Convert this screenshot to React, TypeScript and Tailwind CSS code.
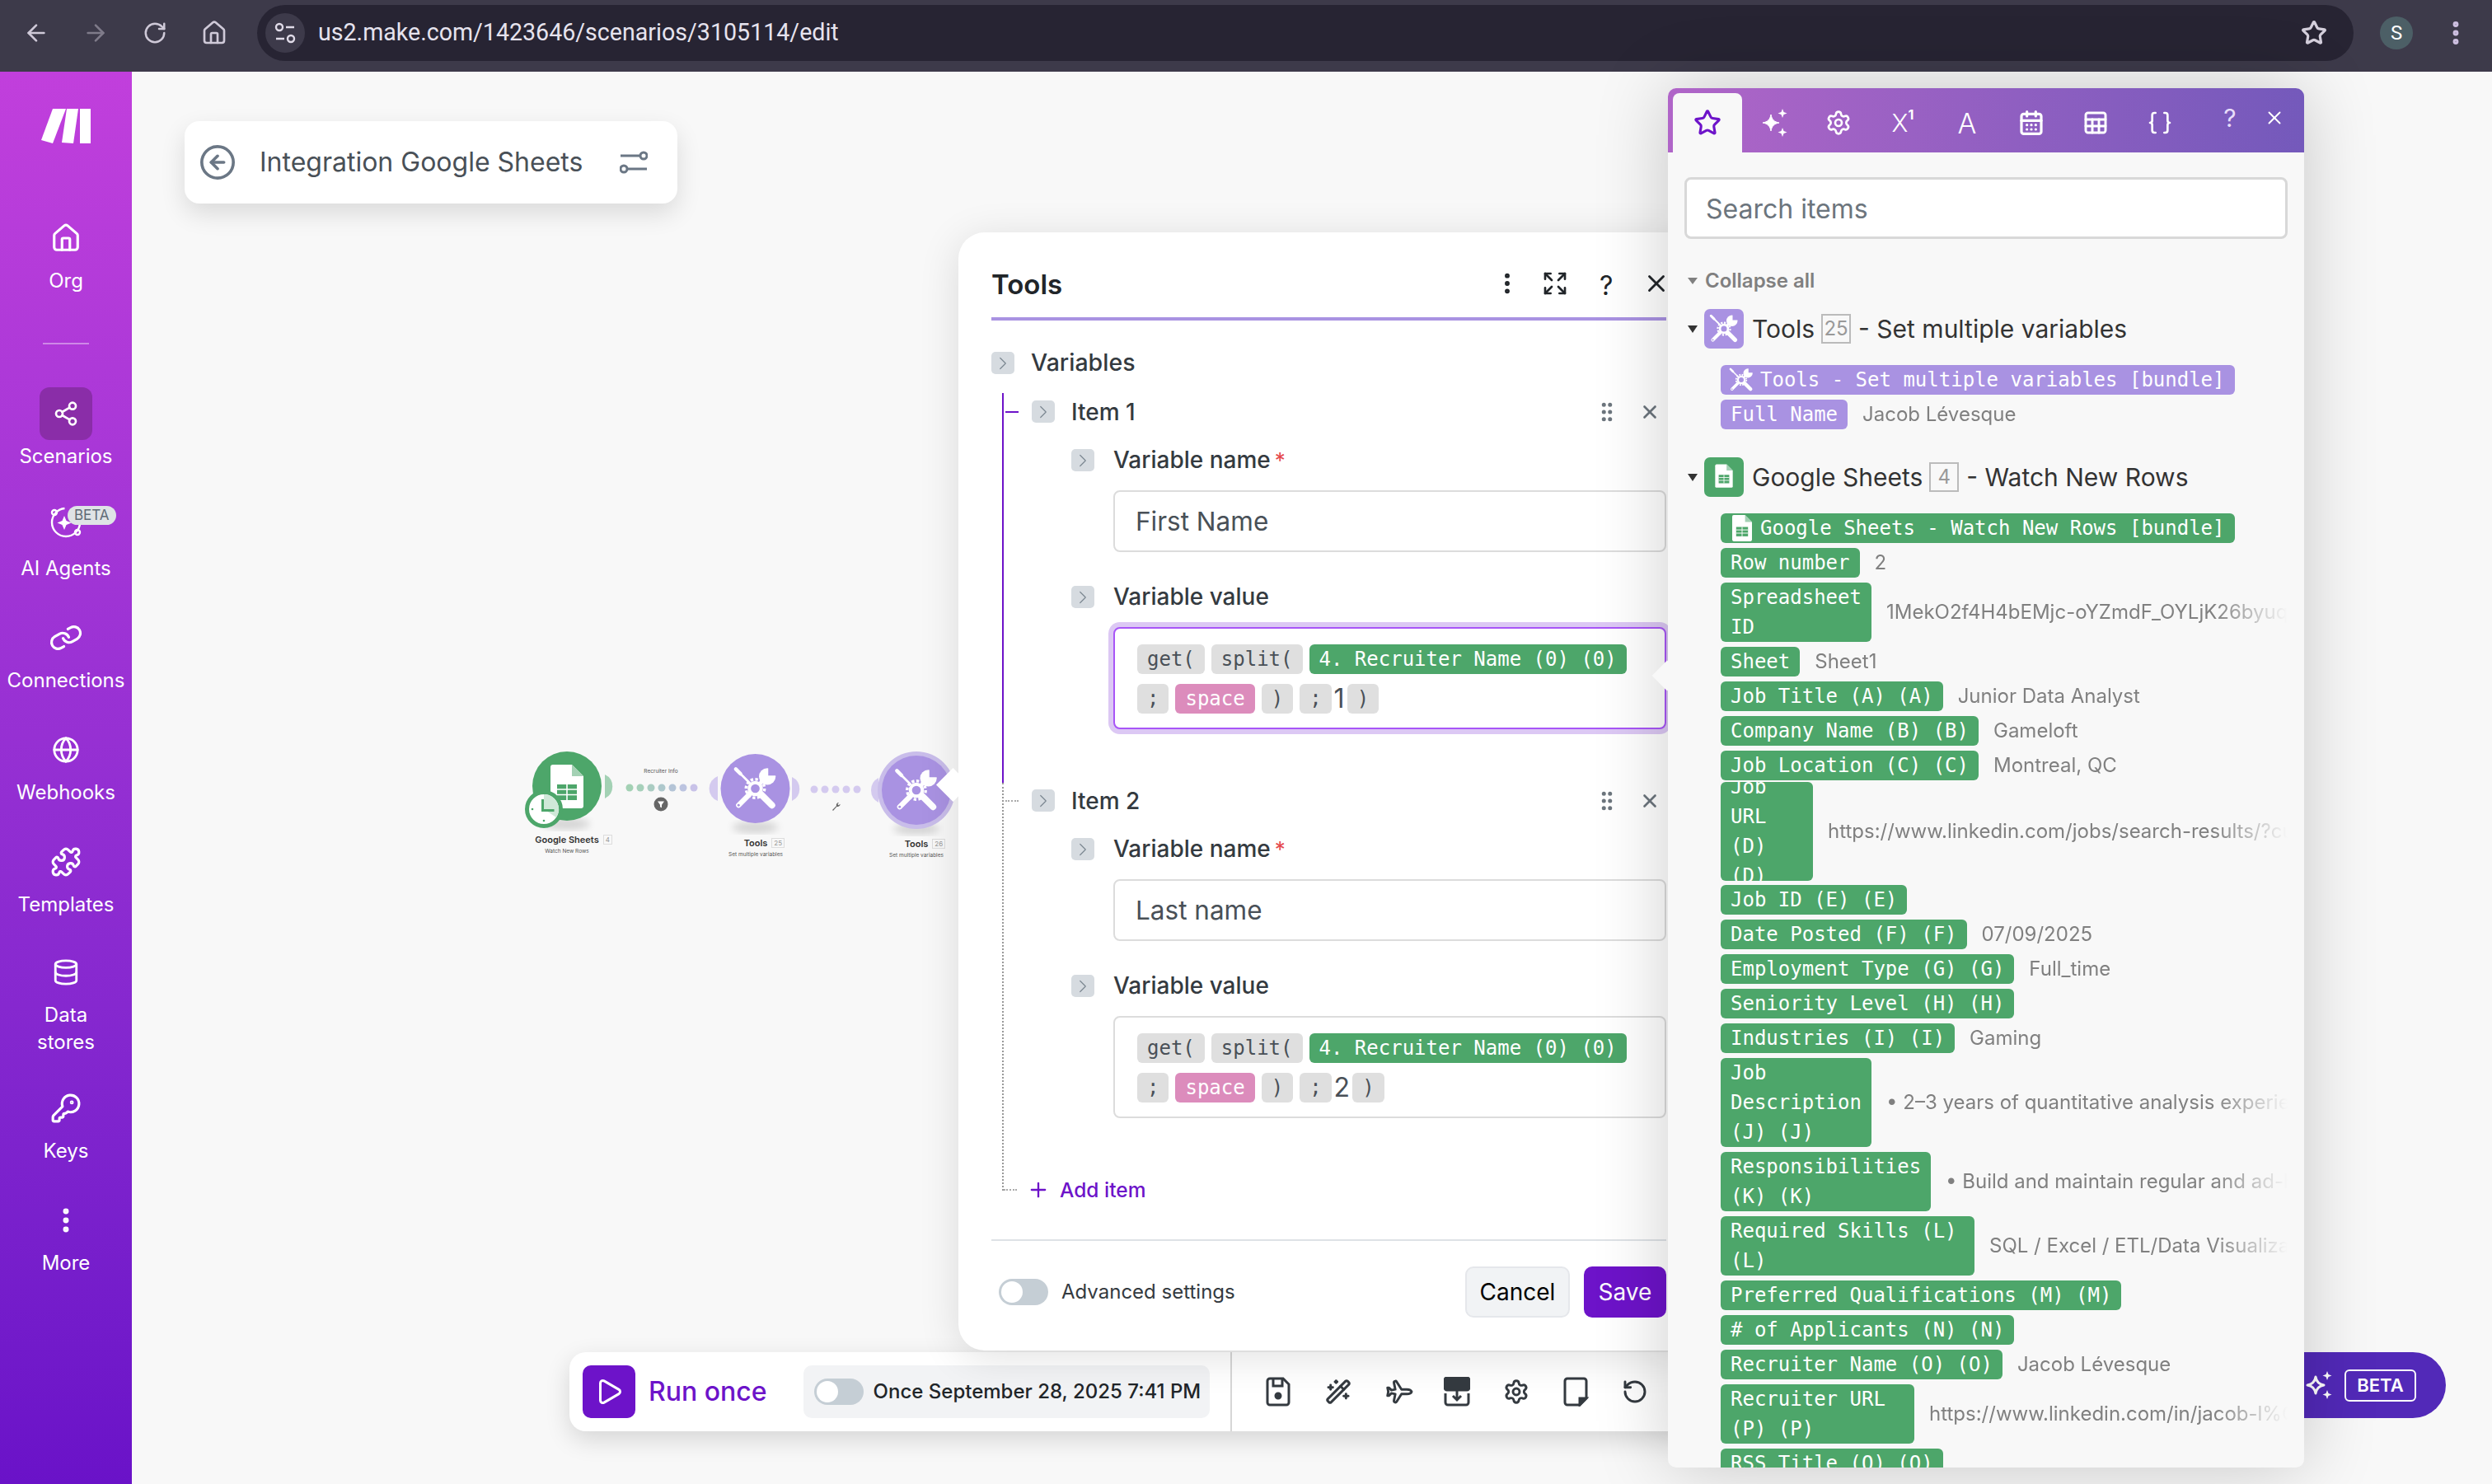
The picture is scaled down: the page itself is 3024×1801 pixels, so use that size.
import type { ReactNode } from 'react';
import {
  ArrowLeft,
  ArrowRight,
  Braces,
  CalendarDays,
  ChevronRight,
  CircleArrowLeft,
  Database,
  EllipsisVertical,
  Expand,
  Globe,
  GripVertical,
  House,
  KeyRound,
  Link as LinkIcon,
  Plane,
  Play,
  Plus,
  Puzzle,
  RotateCcw,
  RotateCw,
  Settings,
  Share2,
  Sheet,
  Star,
  WandSparkles,
  X,
} from 'lucide-react';

const MONO = "font-['DejaVu_Sans_Mono',monospace] text-[24px] leading-[36px]";

function ToolsGlyph({ bg = '#a992e2' }: { bg?: string }) {
  return (
    <g stroke="#fff" fill="none" strokeLinecap="round">
      <line x1="4" y1="4" x2="18" y2="18" strokeWidth="2.4" />
      <line x1="3" y1="3" x2="8" y2="8" strokeWidth="4" />
      <line x1="29" y1="29" x2="42" y2="42" strokeWidth="7" />
      <line x1="18" y1="30" x2="6" y2="42" strokeWidth="5.5" />
      <circle cx="6" cy="42" r="1.3" fill={bg} stroke="none" />
      <line x1="29" y1="19" x2="36" y2="12" strokeWidth="4" />
      <circle cx="37" cy="11" r="9" fill="#fff" stroke="none" />
      <polygon points="38,10 38,-2 50,10" fill={bg} stroke="none" />
      <circle cx="24" cy="24" r="10" strokeWidth="3" strokeDasharray="3 2.2" strokeLinecap="butt" />
      <circle cx="24" cy="24" r="6.5" strokeWidth="3.5" fill={bg} />
    </g>
  );
}

function SheetGlyph({ green = '#4da66a' }: { green?: string }) {
  return (
    <g>
      <path d="M0 3a3 3 0 0 1 3-3h23l14 14v36a3 3 0 0 1-3 3H3a3 3 0 0 1-3-3z" fill="#fff" />
      <path d="M26 0l14 14H26z" fill="#a3d1b4" />
      <path d="M8 24h24v19H8z" fill={green} />
      <path d="M8 30h24M8 36.5h24M20 24v19" stroke="#fff" strokeWidth="1.6" />
    </g>
  );
}

// big four point star with two small ones, used in the tab bar and on the beta pill
function SparkIcon({ filled }: { filled?: boolean }) {
  return (
    <svg
      className="w-[34px] h-[36px]"
      viewBox="0 0 34 36"
      fill={filled ? '#fff' : 'none'}
      stroke="#fff"
      strokeWidth={filled ? 1 : 3}
      strokeLinejoin="round"
    >
      <path d="M13 8c1 6 4 9 10 10-6 1-9 4-10 10-1-6-4-9-10-10 6-1 9-4 10-10z" />
      <path d="M27 1l1.500 4 4 1.500-4 1.500-1.500 4-1.500-4-4-1.500 4-1.500z" fill="#fff" stroke="none" />
      <path d="M27 24l1.500 4 4 1.500-4 1.500-1.500 4-1.500-4-4-1.500 4-1.500z" fill="#fff" stroke="none" />
    </svg>
  );
}

function DiagramNode({ x, y, ring }: { x: number; y: number; ring?: boolean }) {
  return (
    <g>
      <ellipse cx={x} cy={y + 47} rx="28" ry="7" fill="#000" opacity="0.14" filter="url(#soft)" />
      {ring && <circle cx={x} cy={y} r="47" fill="#c9bdea" />}
      <circle cx={x} cy={y} r="42" fill="#a992e2" />
      <g transform={`translate(${x - 27} ${y - 27}) scale(1.125)`}>
        <ToolsGlyph />
      </g>
    </g>
  );
}

function Diagram() {
  const greenDots = ['#a3d1b4', '#a6d0ba', '#aaccc2', '#aec8cc', '#b4c4d6', '#bcc4e0', '#c8c2e8'];
  return (
    <svg className="absolute left-[620px] top-[900px] w-[560px] h-[160px]" viewBox="620 900 560 160">
      <defs>
        <filter id="soft">
          <feGaussianBlur stdDeviation="5" />
        </filter>
      </defs>
      <path d="M734 940a16 16 0 0 1 0 29z" fill="#a3d1b4" />
      <path d="M871 942a16 16 0 0 0 0 30z" fill="#d4caef" />
      <path d="M961 943a16 16 0 0 1 0 29z" fill="#d4caef" />
      <path d="M1066 944a17 17 0 0 0 0 30z" fill="#d4caef" />
      {greenDots.map((fill, i) => (
        <circle key={fill} cx={764 + i * 13} cy="956" r="4.5" fill={fill} />
      ))}
      {[0, 1, 2, 3, 4].map((i) => (
        <circle key={i} cx={988 + i * 13} cy="958" r="4.5" fill="#d4caef" />
      ))}
      <circle cx="802" cy="976" r="8.5" fill="#666" />
      <path d="M798 972.5h8l-3 4.2v3.6l-2-1v-2.6z" fill="#fff" />
      <path d="M1010 983l5-5a3 3 0 0 1 3-4l-1.6 2 1.2 1.2 2-1.4a3 3 0 0 1-4 3l-4.600 5.200z" fill="#666" />

      <ellipse cx="688" cy="1000" rx="28" ry="7" fill="#000" opacity="0.14" filter="url(#soft)" />
      <circle cx="688" cy="954" r="42" fill="#4da66a" />
      <g transform="translate(668 928)">
        <SheetGlyph />
      </g>
      <circle cx="660" cy="982" r="20.500" fill="#fff" stroke="#4da66a" strokeWidth="5" />
      <path d="M660 982v-18a18 18 0 0 1 15 28z" fill="#cfe8d8" />
      <path d="M658.500 970v13.500h14" fill="none" stroke="#4da66a" strokeWidth="3" />
      <circle cx="646" cy="982" r="1.300" fill="#4da66a" />
      <circle cx="660" cy="996" r="1.300" fill="#4da66a" />

      <DiagramNode x={916.5} y={957} />
      <DiagramNode x={1112} y={959} ring />
    </svg>
  );
}

function NodeLabel({ title, num, sub, className }: { title: string; num: string; sub: string; className: string }) {
  return (
    <div className={`absolute flex flex-col items-center w-[140px] ${className}`}>
      <span className="relative text-[11px] leading-[13px] font-semibold text-[#333]">
        {title}
        <span className="absolute left-full top-0 ml-[5px] border border-[#ddd] text-[8px] leading-[10px] px-[2px] font-normal text-[#999]">
          {num}
        </span>
      </span>
      <span className="text-[6.5px] leading-[8px] mt-[3px] text-[#555]">{sub}</span>
    </div>
  );
}

function ChevronBox() {
  return (
    <span className="flex items-center justify-center w-[28px] h-[27px] shrink-0 rounded-[5px] bg-[#d6dbe0]">
      <ChevronRight size={26} strokeWidth={1.1} className="text-[#7c8791]" />
    </span>
  );
}

function Toggle() {
  return (
    <span className="flex items-center w-[60px] h-[32px] shrink-0 rounded-full bg-[#c5ced5] pl-[3px]">
      <span className="w-[26px] h-[26px] rounded-full bg-white" />
    </span>
  );
}

function Token({ children, className = 'bg-[#dfdfdf] text-[#495057]' }: { children: ReactNode; className?: string }) {
  return <span className={`${MONO} px-3 rounded-[6px] whitespace-pre ${className}`}>{children}</span>;
}

function Field({ label, required, children }: { label: string; required?: boolean; children: ReactNode }) {
  return (
    <>
      <div className="flex items-center gap-[23px] h-[27px]">
        <ChevronBox />
        <span className="text-[28px] font-medium text-[#343a40] leading-[27px]">
          {label}
          {required && <span className="text-[#e5484d] text-[26px] ml-[5px] font-normal">*</span>}
        </span>
      </div>
      <div className="ml-[51px] mt-[23px] w-[671px]">{children}</div>
    </>
  );
}

function VariableItem({ title, name, num, active }: { title: string; name: string; num: string; active?: boolean }) {
  return (
    <div
      className={
        active
          ? 'border-l-2 border-[#6d13c9] pt-[9px] pb-[65px]'
          : 'border-l-2 border-dotted border-[#999] pt-[8px] pb-[88px]'
      }
    >
      <div className="flex items-center h-[27px]">
        <span className={active ? 'ml-[2px] w-4 h-[2px] bg-[#6d13c9]' : 'ml-[2px] w-4 border-t-2 border-dotted border-[#aaa]'} />
        <span className="ml-[16px]">
          <ChevronBox />
        </span>
        <span className="ml-[20px] text-[28px] font-medium text-[#343a40]">{title}</span>
        <GripVertical size={30} strokeWidth={2} className="ml-auto text-[#6c757d]" />
        <X size={26} strokeWidth={2.4} className="ml-[24px] mr-[7px] text-[#6c757d]" />
      </div>
      <div className="pl-[82px] mt-[32px]">
        <Field label="Variable name" required>
          <div className="flex items-center h-[75px] rounded-[8px] border-2 border-[#dcdcdc] bg-white pl-[25px] text-[31.5px] text-[#495057]">
            {name}
          </div>
        </Field>
        <div className="h-[41px]" />
        <Field label="Variable value">
          <div
            className={`flex flex-wrap items-center content-start gap-x-2 gap-y-3 h-[124px] rounded-[8px] border-2 bg-white pl-[27px] pt-[19px] ${
              active ? 'border-[#a855f7] ring-[6px] ring-[#dcc8f4]' : 'border-[#dcdcdc]'
            }`}
          >
            <Token>get(</Token>
            <Token>split(</Token>
            <Token className="bg-[#4da66a] text-white">4. Recruiter Name (0) (0)</Token>
            <Token>;</Token>
            <Token className="bg-[#dc8cbc] text-white">space</Token>
            <Token>)</Token>
            <span className="flex items-center">
              <Token>;</Token>
              <span className="text-[32px] leading-[36px] text-[#495057] px-[3px]">{num}</span>
              <Token>)</Token>
            </span>
          </div>
        </Field>
      </div>
    </div>
  );
}

function ToolsPanel() {
  return (
    <section className="absolute left-[1163px] top-[282px] w-[899px] rounded-[32px] bg-white px-10 pb-10 shadow-[0_8px_50px_rgba(0,0,0,0.12)]">
      <span className="absolute -left-[21px] top-[656px] w-[29px] h-[29px] rotate-45 bg-white" />
      <header className="relative flex items-center h-[107px] pt-6 border-b-4 border-[#a992e2] text-[#212529]">
        <h2 className="text-[33px] font-semibold">Tools</h2>
        <EllipsisVertical size={32} strokeWidth={2.4} className="absolute left-[610px] top-[46px]" />
        <Expand size={32} strokeWidth={2} className="absolute left-[668px] top-[46px]" />
        <span className="absolute left-[738px] top-[41px] text-[32px]">?</span>
        <X size={34} strokeWidth={2} className="absolute left-[790px] top-[45px]" />
      </header>
      <div className="flex items-center gap-[20px] h-[27px] mt-[38px]">
        <ChevronBox />
        <span className="text-[28.5px] font-medium text-[#343a40]">Variables</span>
      </div>
      <div className="ml-[13px] mt-[23px]">
        <VariableItem title="Item 1" name="First Name" num="1" active />
        <VariableItem title="Item 2" name="Last name" num="2" />
        <div className="flex items-center h-[28px] -mt-[15px] relative">
          <span className="ml-[2px] w-4 border-t-2 border-dotted border-[#aaa]" />
          <Plus size={28} strokeWidth={2} className="ml-[12px] text-[#6d13c9]" />
          <span className="ml-[12px] text-[24.5px] font-medium text-[#6d13c9]">Add item</span>
        </div>
      </div>
      <div className="mt-[46px] border-t-2 border-[#dee2e6]" />
      <footer className="flex items-center mt-[31px]">
        <span className="ml-[9px]">
          <Toggle />
        </span>
        <span className="ml-4 text-[24px] text-[#343a40]">Advanced settings</span>
        <button className="ml-auto w-[127px] h-[62px] rounded-[10px] border-2 border-[#e5e7eb] bg-[#f1f3f5] text-[28px] text-black">
          Cancel
        </button>
        <button className="ml-[17px] w-[100px] h-[62px] rounded-[10px] bg-[#6d13c9] text-[28px] text-white">Save</button>
      </footer>
    </section>
  );
}

function Toolbar() {
  const icon = 'w-[32px] h-[36px] text-[#343a40]';
  return (
    <div className="absolute left-[691px] top-[1641px] w-[1380px] h-[96px] flex items-center rounded-[20px] bg-white pl-4 shadow-[0_10px_30px_rgba(0,0,0,0.14)]">
      <span className="flex items-center justify-center w-[64px] h-[64px] rounded-[10px] bg-[#6d13c9]">
        <Play size={36} strokeWidth={2} className="text-white" />
      </span>
      <span className="ml-4 text-[32px] font-medium text-[#6d13c9]">Run once</span>
      <div className="ml-[44px] flex items-center w-[493px] h-[64px] rounded-[10px] bg-[#f2f3f5] pl-[13px]">
        <Toggle />
        <span className="ml-3 text-[24px] font-medium text-[#212529] whitespace-nowrap">Once September 28, 2025 7:41 PM</span>
      </div>
      <div className="ml-[25px] self-stretch border-l-2 border-[#d6d6d6]" />
      <div className="flex items-center gap-[40px] ml-[41px]">
        <svg className={icon} viewBox="0 0 32 36" fill="none" stroke="currentColor" strokeWidth="3">
          <path d="M5 2h16l7 7v22a3 3 0 0 1-3 3H5a3 3 0 0 1-3-3V5a3 3 0 0 1 3-3z" />
          <path d="M9 2v9h11V2" />
          <circle cx="15" cy="23" r="3" fill="currentColor" />
        </svg>
        <WandSparkles className={icon} strokeWidth={2.2} />
        <Plane className={`${icon} rotate-45`} strokeWidth={2.2} />
        <svg className={icon} viewBox="0 0 32 36" fill="none" stroke="currentColor" strokeWidth="3">
          <rect x="1" y="1" width="30" height="15" rx="3" fill="currentColor" />
          <path d="M2 20v11a3 3 0 0 0 3 3h22a3 3 0 0 0 3-3V20" />
          <path d="M16 17v10M11 23l5 5 5-5" />
        </svg>
        <Settings className={icon} strokeWidth={2.2} />
        <svg className={icon} viewBox="0 0 32 36" fill="none" stroke="currentColor" strokeWidth="3">
          <path d="M6 2h20a3 3 0 0 1 3 3v21l-8 8H6a3 3 0 0 1-3-3V5a3 3 0 0 1 3-3z" />
          <path d="M29 26h-8v8z" fill="currentColor" />
        </svg>
        <RotateCcw className={icon} strokeWidth={2.2} />
      </div>
    </div>
  );
}

const TOOL_ROWS = [{ label: 'Full Name', value: 'Jacob Lévesque' }];

const SHEET_ROWS = [
  { label: 'Row number', value: '2' },
  { label: 'Spreadsheet ID', value: '1MekO2f4H4bEMjc-oYZmdF_OYLjK26byuqhT3xN0', box: 'w-[183px]' },
  { label: 'Sheet', value: 'Sheet1' },
  { label: 'Job Title (A) (A)', value: 'Junior Data Analyst' },
  { label: 'Company Name (B) (B)', value: 'Gameloft' },
  { label: 'Job Location (C) (C)', value: 'Montreal, QC' },
  {
    label: 'Job URL (D) (D)',
    value: 'https://www.linkedin.com/jobs/search-results/?currentJobId=41',
    box: 'w-[112px] h-[120px]',
    row: '-mt-[4px] mb-[5px]',
  },
  { label: 'Job ID (E) (E)', value: '' },
  { label: 'Date Posted (F) (F)', value: '07/09/2025' },
  { label: 'Employment Type (G) (G)', value: 'Full_time' },
  { label: 'Seniority Level (H) (H)', value: '' },
  { label: 'Industries (I) (I)', value: 'Gaming' },
  { label: 'Job Description (J) (J)', value: '• 2–3 years of quantitative analysis experience', box: 'w-[183px]' },
  { label: 'Responsibilities (K) (K)', value: '• Build and maintain regular and ad-hoc reports', box: 'w-[255px]' },
  { label: 'Required Skills (L) (L)', value: 'SQL / Excel / ETL/Data Visualization', box: 'w-[308px]' },
  { label: 'Preferred Qualifications (M) (M)', value: '' },
  { label: '# of Applicants (N) (N)', value: '' },
  { label: 'Recruiter Name (O) (O)', value: 'Jacob Lévesque' },
  { label: 'Recruiter URL (P) (P)', value: 'https://www.linkedin.com/in/jacob-l%C3%A9vesque', box: 'w-[235px]' },
  { label: 'RSS Title (Q) (Q)', value: '' },
];

function DataRow({ label, value, color, box, row }: { label: string; value: string; color: string; box?: string; row?: string }) {
  return (
    <div className={`flex items-center ${row ?? 'mb-[6px]'}`}>
      <span
        className={`${MONO} ${color} ${box ?? 'whitespace-pre'} flex items-center shrink-0 px-3 rounded-[6px] text-white overflow-hidden`}
      >
        <span>{label}</span>
      </span>
      <span className="ml-[18px] min-w-0 flex-1 whitespace-nowrap overflow-hidden text-[24px] leading-[36px] text-[#808080] [mask-image:linear-gradient(to_left,transparent,black_90px)]">
        {value}
      </span>
    </div>
  );
}

function SectionHeader({ icon, name, num, sub }: { icon: ReactNode; name: string; num: string; sub: string }) {
  return (
    <div className="flex items-center h-[48px] text-[30px] text-[#333]">
      <span className="ml-[4px] w-0 h-0 border-x-[6px] border-x-transparent border-t-[9px] border-t-[#333]" />
      <span className="ml-[8px] flex items-center justify-center w-[48px] h-[48px] rounded-[7px]">{icon}</span>
      <span className="ml-[10px]">{name}</span>
      <span className="ml-[8px] w-[36px] h-[36px] border-2 border-[#bbb] text-[24px] leading-[32px] text-center text-[#999]">{num}</span>
      <span className="ml-[9px]">- {sub}</span>
    </div>
  );
}

function MappingPanel() {
  const tab = 'flex items-center justify-center w-[78px] pt-[6px] text-white';
  return (
    <aside className="absolute left-[2024px] top-[107px] w-[772px] h-[1674px] flex flex-col rounded-[10px] bg-[#f8f8f8] shadow-[0_0_90px_rgba(0,0,0,0.2)]">
      <span className="absolute -left-[14px] top-[700px] w-[26px] h-[26px] rotate-45 bg-[#f8f8f8]" />
      <div className="flex h-[78px] shrink-0 pl-[6px] rounded-t-[10px] bg-linear-to-r from-[#b065c8] to-[#7459bb]">
        <div className="flex items-center justify-center w-[84px] h-[72px] mt-[6px] rounded-t-[8px] bg-[#f8f8f8]">
          <Star size={34} strokeWidth={2.2} className="text-[#6d13c9]" />
        </div>
        <span className={tab}>
          <SparkIcon filled />
        </span>
        <span className={tab}>
          <Settings size={32} strokeWidth={2} />
        </span>
        <span className={`${tab} text-[30px] font-light`}>
          X<sup className="text-[16px] font-bold -mt-1">1</sup>
        </span>
        <span className={`${tab} text-[34px] font-light`}>A</span>
        <span className={tab}>
          <CalendarDays size={32} strokeWidth={2.4} />
        </span>
        <span className={tab}>
          <Sheet size={32} strokeWidth={2.2} />
        </span>
        <span className={tab}>
          <Braces size={32} strokeWidth={2} />
        </span>
        <span className="flex items-center justify-center w-[40px] ml-[26px] -mt-[6px] text-[30px] text-[#e8defa]">?</span>
        <span className="flex items-center justify-center w-[40px] ml-[14px] -mt-[6px] text-white">
          <X size={26} strokeWidth={1.8} />
        </span>
      </div>
      <div className="flex-1 min-h-0 overflow-hidden px-5 pt-[30px]">
        <div className="flex items-center h-[75px] rounded-[8px] border-[3px] border-[#d8d8d8] bg-white pl-[23px] pt-[2px] text-[32px] text-[#6c757d]">
          Search items
        </div>
        <div className="flex items-center h-[30px] mt-9 text-[24px] font-semibold text-[#808080]">
          <span className="ml-[4px] w-0 h-0 border-x-[6px] border-x-transparent border-t-[8px] border-t-[#808080]" />
          <span className="ml-[9px]">Collapse all</span>
        </div>
        <div className="mt-[19px]">
          <SectionHeader
            name="Tools"
            num="25"
            sub="Set multiple variables"
            icon={
              <svg className="w-[48px] h-[48px] rounded-[7px] bg-[#a992e2]" viewBox="-8 -8 64 64">
                <ToolsGlyph />
              </svg>
            }
          />
        </div>
        <div className="pl-[44px] mt-5">
          <div className={`${MONO} flex items-center w-[624px] h-[36px] mb-[6px] pl-[10px] rounded-[6px] bg-[#a992e2] text-white whitespace-pre`}>
            <svg className="w-[30px] h-[30px] mr-[8px]" viewBox="0 0 48 48">
              <ToolsGlyph />
            </svg>
            Tools - Set multiple variables [bundle]
          </div>
          {TOOL_ROWS.map((r) => (
            <DataRow key={r.label} {...r} color="bg-[#a992e2]" />
          ))}
        </div>
        <div className="mt-[34px]">
          <SectionHeader
            name="Google Sheets"
            num="4"
            sub="Watch New Rows"
            icon={
              <svg className="w-[48px] h-[48px] rounded-[7px] bg-[#4da66a]" viewBox="-25 -16 90 90">
                <SheetGlyph />
              </svg>
            }
          />
        </div>
        <div className="pl-[44px] mt-5">
          <div className={`${MONO} flex items-center w-[624px] h-[36px] mb-[6px] pl-[14px] rounded-[6px] bg-[#4da66a] text-white whitespace-pre`}>
            <svg className="w-[24px] h-[32px] mr-[10px]" viewBox="0 0 40 53">
              <SheetGlyph />
            </svg>
            Google Sheets - Watch New Rows [bundle]
          </div>
          {SHEET_ROWS.map((r) => (
            <DataRow key={r.label} {...r} color="bg-[#4da66a]" />
          ))}
        </div>
      </div>
    </aside>
  );
}

function SideItem({
  label,
  icon,
  active,
  badge,
  className = '',
}: {
  label: ReactNode;
  icon: ReactNode;
  active?: boolean;
  badge?: boolean;
  className?: string;
}) {
  return (
    <div className={`relative flex flex-col items-center w-full text-white ${className}`}>
      <span className={`flex items-center justify-center w-[64px] h-[64px] rounded-[12px] ${active ? 'bg-[#8a2da8]' : ''}`}>{icon}</span>
      {badge && (
        <span className="absolute left-[82px] top-[8px] px-[8px] rounded-full bg-[#dfe3e6] text-[17px] leading-[23px] text-[#5f6b76]">BETA</span>
      )}
      <span className="mt-[3px] text-[24px] leading-[33px] text-center">{label}</span>
    </div>
  );
}

function Sidebar() {
  const size = 'w-[38px] h-[38px]';
  return (
    <nav className="flex flex-col items-center w-40 shrink-0 bg-linear-to-b from-[#c13fdc] to-[#6a12c8]">
      <svg className="w-[60px] h-[42px] mt-[45px] mb-[83px]" viewBox="0 0 60 42" fill="#fff">
        <polygon points="14,0 30,0 14,42 0,38" />
        <polygon points="31,0 45,0 39,42 25,41" />
        <polygon points="47,0 60,0 60,42 47,42" />
      </svg>
      <SideItem label="Org" icon={<House className={size} strokeWidth={2} />} />
      <div className="w-[56px] h-[2px] bg-white/40 mt-[59px] mb-[52px]" />
      <div className="flex flex-col gap-[36px] w-full">
        <SideItem label="Scenarios" active icon={<Share2 className="w-[32px] h-[32px]" strokeWidth={2} />} />
        <SideItem
          label="AI Agents"
          badge
          icon={
            <svg className="w-[44px] h-[44px] -mt-[8px]" viewBox="0 0 44 44" fill="none" stroke="#fff" strokeWidth="2.4">
              <circle cx="22" cy="22" r="17" strokeDasharray="78 12" />
              <circle cx="8" cy="10" r="3" />
              <circle cx="36" cy="34" r="3" />
              <path d="M20 14l2.500 6 6 2.500-6 2.500-2.500 6-2.500-6-6-2.500 6-2.500z" fill="#fff" stroke="none" />
            </svg>
          }
        />
        <SideItem label="Connections" icon={<LinkIcon className={`${size} rotate-[15deg]`} strokeWidth={2} />} />
        <SideItem label="Webhooks" icon={<Globe className="w-[34px] h-[34px]" strokeWidth={2} />} />
        <SideItem label="Templates" icon={<Puzzle className={size} strokeWidth={2} />} />
        <SideItem
          className="-mt-[2px]"
          label={
            <>
              Data
              <br />
              stores
            </>
          }
          icon={<Database className="w-[34px] h-[34px]" strokeWidth={2} />}
        />
        <SideItem className="-mt-[4px]" label="Keys" icon={<KeyRound className={size} strokeWidth={2} />} />
        <SideItem label="More" icon={<EllipsisVertical className={size} strokeWidth={2.4} />} />
      </div>
    </nav>
  );
}

function BrowserBar() {
  return (
    <div className="flex items-center h-[87px] shrink-0 bg-[#3d3a4a] pl-[28px] pb-2 font-['Roboto',sans-serif]">
      <ArrowLeft size={32} strokeWidth={2} className="text-[#cfc9d8]" />
      <ArrowRight size={32} strokeWidth={2} className="ml-[40px] text-[#7f7b8a]" />
      <RotateCw size={30} strokeWidth={2} className="ml-[41px] text-[#cfc9d8]" />
      <House size={32} strokeWidth={2} className="ml-[41px] text-[#cfc9d8]" />
      <div className="flex items-center ml-[36px] w-[2544px] h-[68px] rounded-full bg-[#272433] pl-[10px]">
        <span className="flex items-center justify-center w-[48px] h-[48px] rounded-full bg-[#3d3a4a]">
          <svg className="w-[26px] h-[26px]" viewBox="0 0 26 26" fill="none" stroke="#e0dbe8" strokeWidth="2.4">
            <circle cx="6" cy="6" r="4" />
            <path d="M14 6h10M2 20h10" />
            <circle cx="20" cy="20" r="4" />
          </svg>
        </span>
        <span className="ml-[16px] text-[28.6px] text-[#e6e3ee]">us2.make.com/1423646/scenarios/3105114/edit</span>
        <Star size={32} strokeWidth={2.4} className="ml-auto mr-[32px] text-[#d4cfdc]" />
      </div>
      <span className="flex items-center justify-center ml-[32px] w-[40px] h-[40px] rounded-full bg-[#4c5f66] text-[24px] text-white">S</span>
      <EllipsisVertical size={36} strokeWidth={2.6} className="ml-[34px] text-[#cdbfe0]" />
    </div>
  );
}

export default function App() {
  return (
    <div className="relative flex flex-col w-[3024px] h-[1801px] overflow-hidden bg-[#f8f8f8] font-['Inter',sans-serif]">
      <BrowserBar />
      <div className="flex flex-1 min-h-0">
        <Sidebar />
        <main className="flex-1">
          <div className="absolute left-[224px] top-[147px] w-[598px] h-[100px] flex items-center rounded-[18px] bg-white pl-[17px] shadow-[0_12px_30px_rgba(0,0,0,0.12)]">
            <CircleArrowLeft size={46} strokeWidth={1.9} className="text-[#6b7785]" />
            <span className="ml-[28px] text-[32px] text-[#495057] whitespace-nowrap">Integration Google Sheets</span>
            <svg className="ml-auto mr-[36px] w-[34px] h-[28px]" viewBox="0 0 34 28" fill="none" stroke="#6b7785" strokeWidth="3">
              <path d="M1 6h24M9 22h24" />
              <circle cx="29" cy="6" r="4" />
              <circle cx="5" cy="22" r="4" />
            </svg>
          </div>

          <Diagram />
          <span className="absolute left-[772px] top-[932px] w-[60px] text-center text-[6.500px] leading-[8px] text-[#555]">Recruiter Info</span>
          <NodeLabel title="Google Sheets" num="4" sub="Watch New Rows" className="left-[618px] top-[1013px]" />
          <NodeLabel title="Tools" num="25" sub="Set multiple variables" className="left-[847px] top-[1017px]" />
          <NodeLabel title="Tools" num="26" sub="Set multiple variables" className="left-[1042px] top-[1018px]" />

          <div className="absolute left-[2700px] top-[1641px] w-[268px] h-[80px] flex items-center justify-end rounded-r-full bg-[#5229b8] pr-[36px] text-white">
            <span className="mr-[14px]">
              <SparkIcon />
            </span>
            <span className="flex items-center justify-center w-[87px] h-[39px] rounded-[6px] border-2 border-white text-[22px] font-semibold">BETA</span>
          </div>

          <Toolbar />
          <ToolsPanel />
          <MappingPanel />
        </main>
      </div>
    </div>
  );
}
